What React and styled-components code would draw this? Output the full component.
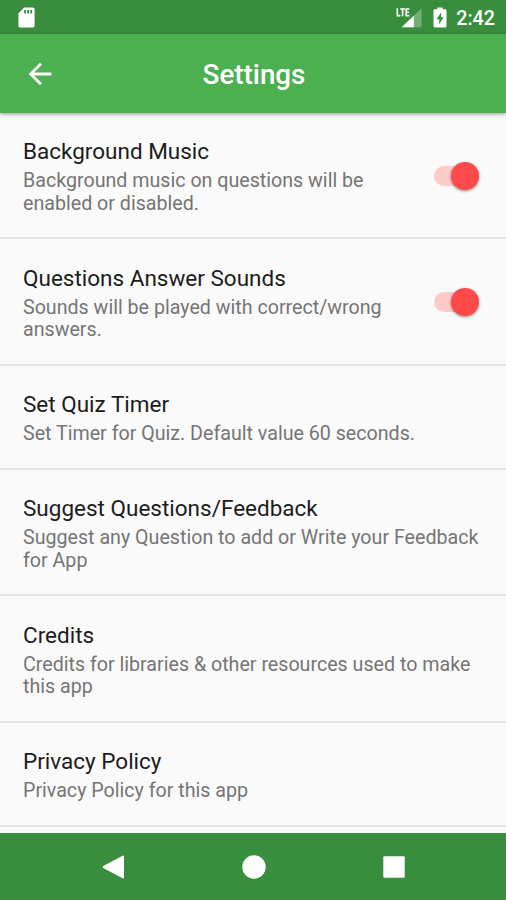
import { useState } from "react";
import styled, { createGlobalStyle } from "styled-components";

const GlobalStyle = createGlobalStyle`
  *, *::before, *::after {
    box-sizing: border-box;
  }

  body {
    margin: 0;
    background: #fafafa;
    font-family: Roboto, "Liberation Sans", sans-serif;
  }
`;

const items = [
  {
    title: "Background Music",
    text: "Background music on questions will be enabled or disabled.",
    toggle: true,
  },
  {
    title: "Questions Answer Sounds",
    text: "Sounds will be played with correct/wrong answers.",
    toggle: true,
  },
  {
    title: "Set Quiz Timer",
    text: "Set Timer for Quiz. Default value 60 seconds.",
    short: true,
  },
  {
    title: "Suggest Questions/Feedback",
    text: "Suggest any Question to add or Write your Feedback for App",
  },
  {
    title: "Credits",
    text: "Credits for libraries & other resources used to make this app",
  },
  {
    title: "Privacy Policy",
    text: "Privacy Policy for this app",
    short: true,
  },
];

const SdCardIcon = () => (
  <svg width="17" height="21" viewBox="0 0 17 21">
    <path
      fill="#fff"
      fillRule="evenodd"
      d="M6.2 0.5H15Q16.6 0.5 16.6 2.1V18.7Q16.6 20.4 15 20.4H2Q0.4 20.4 0.4 18.7V6.4ZM6.1 2.9V6.4H7.9V2.9ZM9.2 2.9V6.4H11V2.9ZM12.3 2.9V6.4H14.1V2.9Z"
    />
  </svg>
);

const SignalIcon = () => (
  <svg width="27" height="21" viewBox="0 0 27 21">
    <path fill="#fff" fillOpacity="0.3" d="M25.6 1.2V20.3H5.6Z" />
    <path fill="#fff" d="M17.8 8.7V20.3H5.6Z" />
    <path
      fill="none"
      stroke="#fff"
      strokeWidth="1.6"
      d="M1.3 1.2V8.6H4.4M4.2 2H9M6.6 2V9.3M13.3 2H10.2V8.6H13.3M10.2 5.3H13"
    />
  </svg>
);

const BatteryIcon = () => (
  <svg width="14" height="21" viewBox="0 0 14 21">
    <path
      fill="#fff"
      fillRule="evenodd"
      d="M4.3 0.4H9.7V2.3H12.2Q13.5 2.3 13.5 3.6V19.1Q13.5 20.4 12.2 20.4H1.8Q0.5 20.4 0.5 19.1V3.6Q0.5 2.3 1.8 2.3H4.3ZM8.1 5.4L3.5 12.3H6.2V17.3L10.6 10.2H8.1Z"
    />
  </svg>
);

const BackIcon = () => (
  <svg width="34" height="34" viewBox="0 0 24 24">
    <path
      fill="#fff"
      d="M20 11H7.83l5.59-5.59L12 4l-8 8 8 8 1.41-1.41L7.83 13H20v-2z"
    />
  </svg>
);

const SettingRow = ({ title, text, toggle, short }) => {
  const [on, setOn] = useState(true);

  return (
    <Row $short={short}>
      <RowBody>
        <RowTitle>{title}</RowTitle>
        <RowText>{text}</RowText>
      </RowBody>
      {toggle && (
        <Switch
          role="switch"
          aria-checked={on}
          aria-label={title}
          $on={on}
          onClick={() => setOn(!on)}
        >
          <Thumb $on={on} />
        </Switch>
      )}
    </Row>
  );
};

export default function App() {
  return (
    <Screen>
      <GlobalStyle />
      <StatusBar>
        <SdCardIcon />
        <StatusIcons>
          <SignalIcon />
          <BatteryIcon />
          <Clock>2:42</Clock>
        </StatusIcons>
      </StatusBar>
      <Toolbar>
        <BackButton aria-label="Back">
          <BackIcon />
        </BackButton>
        <ToolbarTitle>Settings</ToolbarTitle>
      </Toolbar>
      <List>
        {items.map((item) => (
          <SettingRow key={item.title} {...item} />
        ))}
      </List>
      <NavBar>
        <svg width="24" height="26" viewBox="0 0 24 26">
          <path
            fill="#fff"
            d="M21.6 1.8Q23 1 23 2.5V23.5Q23 25 21.6 24.2L2.2 14Q0.8 13 2.2 12Z"
          />
        </svg>
        <svg width="24" height="24" viewBox="0 0 24 24">
          <circle cx="12" cy="12" r="11.7" fill="#fff" />
        </svg>
        <svg width="24" height="24" viewBox="0 0 24 24">
          <rect x="1.3" y="1.3" width="21.4" height="21.4" rx="1" fill="#fff" />
        </svg>
      </NavBar>
    </Screen>
  );
}

const Screen = styled.div`
  display: flex;
  flex-direction: column;
  width: 506px;
  height: 900px;
  overflow: hidden;
  background: #fafafa;
`;

const StatusBar = styled.header`
  display: flex;
  flex: none;
  align-items: center;
  justify-content: space-between;
  height: 34px;
  padding: 0 11px 0 17.5px;
  background: #388e3c;
`;

const StatusIcons = styled.div`
  display: flex;
  align-items: center;
  gap: 9.5px;
`;

const Clock = styled.span`
  padding-top: 3px;
  color: #fff;
  font-size: 19.7px;
  font-weight: 500;
  line-height: 31px;
`;

const Toolbar = styled.div`
  display: grid;
  flex: none;
  grid-template-columns: 80px 1fr 78px;
  align-items: center;
  height: 79px;
  background: #4caf50;
  box-shadow: 0 1px 4px rgba(0, 0, 0, 0.4);
  z-index: 1;
`;

const BackButton = styled.button`
  display: flex;
  justify-content: center;
  padding: 0;
  border: 0;
  background: none;
`;

const ToolbarTitle = styled.h1`
  margin: 0;
  padding-top: 2px;
  color: #fff;
  font-size: 27.8px;
  font-weight: 500;
  line-height: 34px;
  text-align: center;
`;

const List = styled.main`
  flex: 1;
  min-height: 0;
  margin-top: -0.2px;
`;

const Row = styled.section`
  display: flex;
  align-items: flex-start;
  justify-content: space-between;
  height: ${(p) => (p.$short ? "103.8px" : "126.6px")};
  padding: 24.2px 23px 0;
  border-bottom: 2px solid #e2e2e2;
`;

const RowBody = styled.div`
  flex: 1;
`;

const RowTitle = styled.h2`
  margin: 0;
  color: #1c1c1c;
  font-size: 22.5px;
  font-weight: 400;
  line-height: 28px;
`;

const RowText = styled.p`
  margin: 5px 0 0;
  color: #757575;
  font-size: 19.65px;
  line-height: 22.8px;
`;

const Switch = styled.button`
  display: flex;
  flex: none;
  align-items: center;
  justify-content: ${(p) => (p.$on ? "flex-end" : "flex-start")};
  width: 45px;
  height: 20px;
  margin: 28.6px 4px 0 30px;
  padding: 0;
  border: 0;
  border-radius: 10px;
  background: ${(p) => (p.$on ? "#ffcaca" : "#b9b9b9")};
`;

const Thumb = styled.span`
  width: 28px;
  height: 28px;
  border-radius: 50%;
  background: ${(p) => (p.$on ? "#ff4a4c" : "#ececec")};
  box-shadow: 0 1px 3px rgba(0, 0, 0, 0.45);
`;

const NavBar = styled.nav`
  display: flex;
  flex: none;
  align-items: center;
  justify-content: space-between;
  height: 67px;
  padding: 0 100px 0 101px;
  background: #388e3c;
`;
